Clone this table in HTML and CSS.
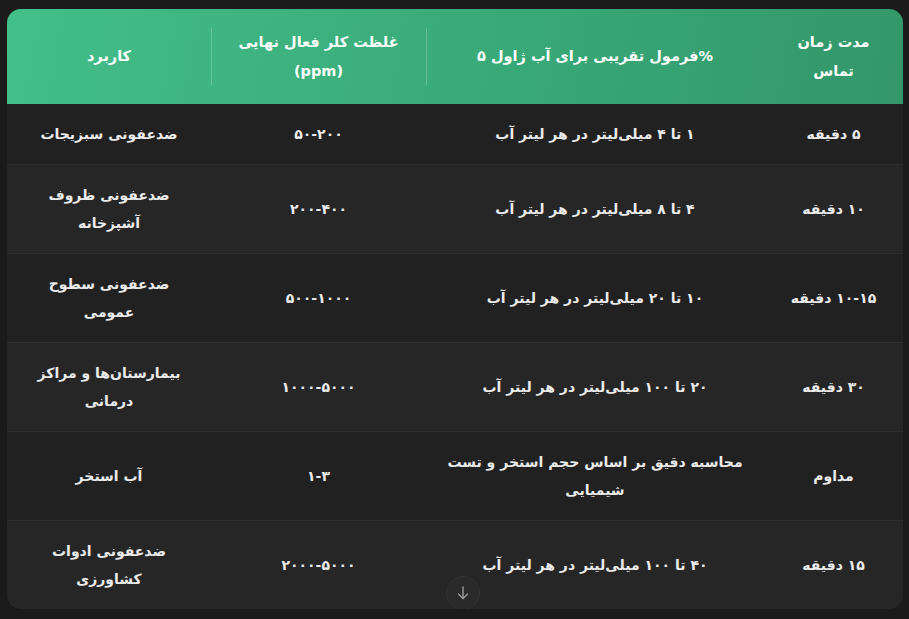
FILE: index.html
```html
<!DOCTYPE html>
<html lang="fa">
<head>
<meta charset="utf-8">
<title>جدول ضدعفونی</title>
<link rel="stylesheet" href="styles.css">
</head>
<body>
<div class="page">
  <div class="card">
    <table class="grid" dir="rtl">
      <colgroup>
        <col class="c-time">
        <col class="c-formula">
        <col class="c-ppm">
        <col class="c-use">
      </colgroup>
      <thead>
        <tr>
          <th>مدت زمان تماس</th>
          <th class="sep">%فرمول تقریبی برای آب ژاول ۵</th>
          <th class="sep">غلظت کلر فعال نهایی (ppm)</th>
          <th>کاربرد</th>
        </tr>
      </thead>
      <tbody>
        <tr>
          <td>۵ دقیقه</td>
          <td>۱ تا ۴ میلی‌لیتر در هر لیتر آب</td>
          <td>۵۰-۲۰۰</td>
          <td>ضدعفونی سبزیجات</td>
        </tr>
        <tr>
          <td>۱۰ دقیقه</td>
          <td>۴ تا ۸ میلی‌لیتر در هر لیتر آب</td>
          <td>۲۰۰-۴۰۰</td>
          <td>ضدعفونی ظروف آشپزخانه</td>
        </tr>
        <tr>
          <td>۱۰-۱۵ دقیقه</td>
          <td>۱۰ تا ۲۰ میلی‌لیتر در هر لیتر آب</td>
          <td>۵۰۰-۱۰۰۰</td>
          <td>ضدعفونی سطوح عمومی</td>
        </tr>
        <tr>
          <td>۳۰ دقیقه</td>
          <td>۲۰ تا ۱۰۰ میلی‌لیتر در هر لیتر آب</td>
          <td>۱۰۰۰-۵۰۰۰</td>
          <td>بیمارستان‌ها و مراکز درمانی</td>
        </tr>
        <tr>
          <td>مداوم</td>
          <td>محاسبه دقیق بر اساس حجم استخر و تست شیمیایی</td>
          <td>۱-۳</td>
          <td>آب استخر</td>
        </tr>
        <tr>
          <td>۱۵ دقیقه</td>
          <td>۴۰ تا ۱۰۰ میلی‌لیتر در هر لیتر آب</td>
          <td>۲۰۰۰-۵۰۰۰</td>
          <td>ضدعفونی ادوات کشاورزی</td>
        </tr>
      </tbody>
    </table>
    <button class="scroll-down" aria-label="scroll down">
      <svg width="16" height="16" viewBox="0 0 16 16" fill="none" stroke="currentColor" stroke-width="1.4" stroke-linecap="round" stroke-linejoin="round">
        <path d="M8 2v11.5"/>
        <path d="M3.5 9l4.5 4.5L12.5 9"/>
      </svg>
    </button>
  </div>
</div>
</body>
</html>
```

FILE: styles.css
```css
* { box-sizing: border-box; }

html, body {
  margin: 0;
  padding: 0;
  background: #1b1b1b;
  height: 100%;
  overflow: hidden;
}

.page {
  padding: 9px 6px 0 7px;
}

.card {
  position: relative;
  border-radius: 14px;
  overflow: hidden;
  background: #222222;
  font-family: "DejaVu Sans", sans-serif;
}

.grid {
  width: 100%;
  border-collapse: collapse;
  table-layout: fixed;
  color: #ebebeb;
  font-size: 14px;
}

.c-time { width: 139px; }
.c-formula { width: 338px; }
.c-ppm { width: 215px; }
.c-use { width: 204px; }

.grid thead tr {
  background: linear-gradient(100deg, #43bf89 0%, #3aab79 50%, #33976a 100%);
}

.grid th {
  position: relative;
  height: 95px;
  padding: 16px 22px;
  font-weight: bold;
  font-size: 14.5px;
  color: #ffffff;
  line-height: 29px;
  text-align: center;
  vertical-align: middle;
}

.grid th.sep::after {
  content: "";
  position: absolute;
  left: 0;
  top: 19px;
  bottom: 19px;
  width: 1px;
  background: rgba(255, 255, 255, 0.22);
}

.grid td {
  padding: 16px 24px;
  line-height: 28px;
  font-weight: bold;
  text-align: center;
  vertical-align: middle;
  border-top: 1px solid #2e2e2e;
}

.grid td:nth-child(2) {
  padding-left: 10px;
  padding-right: 10px;
}

.grid tbody tr:first-child td { border-top: none; }

.grid tbody tr:nth-child(odd) { background: #212121; }
.grid tbody tr:nth-child(even) { background: #262626; }

.scroll-down {
  position: absolute;
  left: 50%;
  bottom: -1px;
  margin-left: -9px;
  width: 34px;
  height: 34px;
  border-radius: 50%;
  border: 1px solid #323232;
  background: #2a2a2a;
  color: #9a9a9a;
  display: flex;
  align-items: center;
  justify-content: center;
  padding: 0;
}
```
